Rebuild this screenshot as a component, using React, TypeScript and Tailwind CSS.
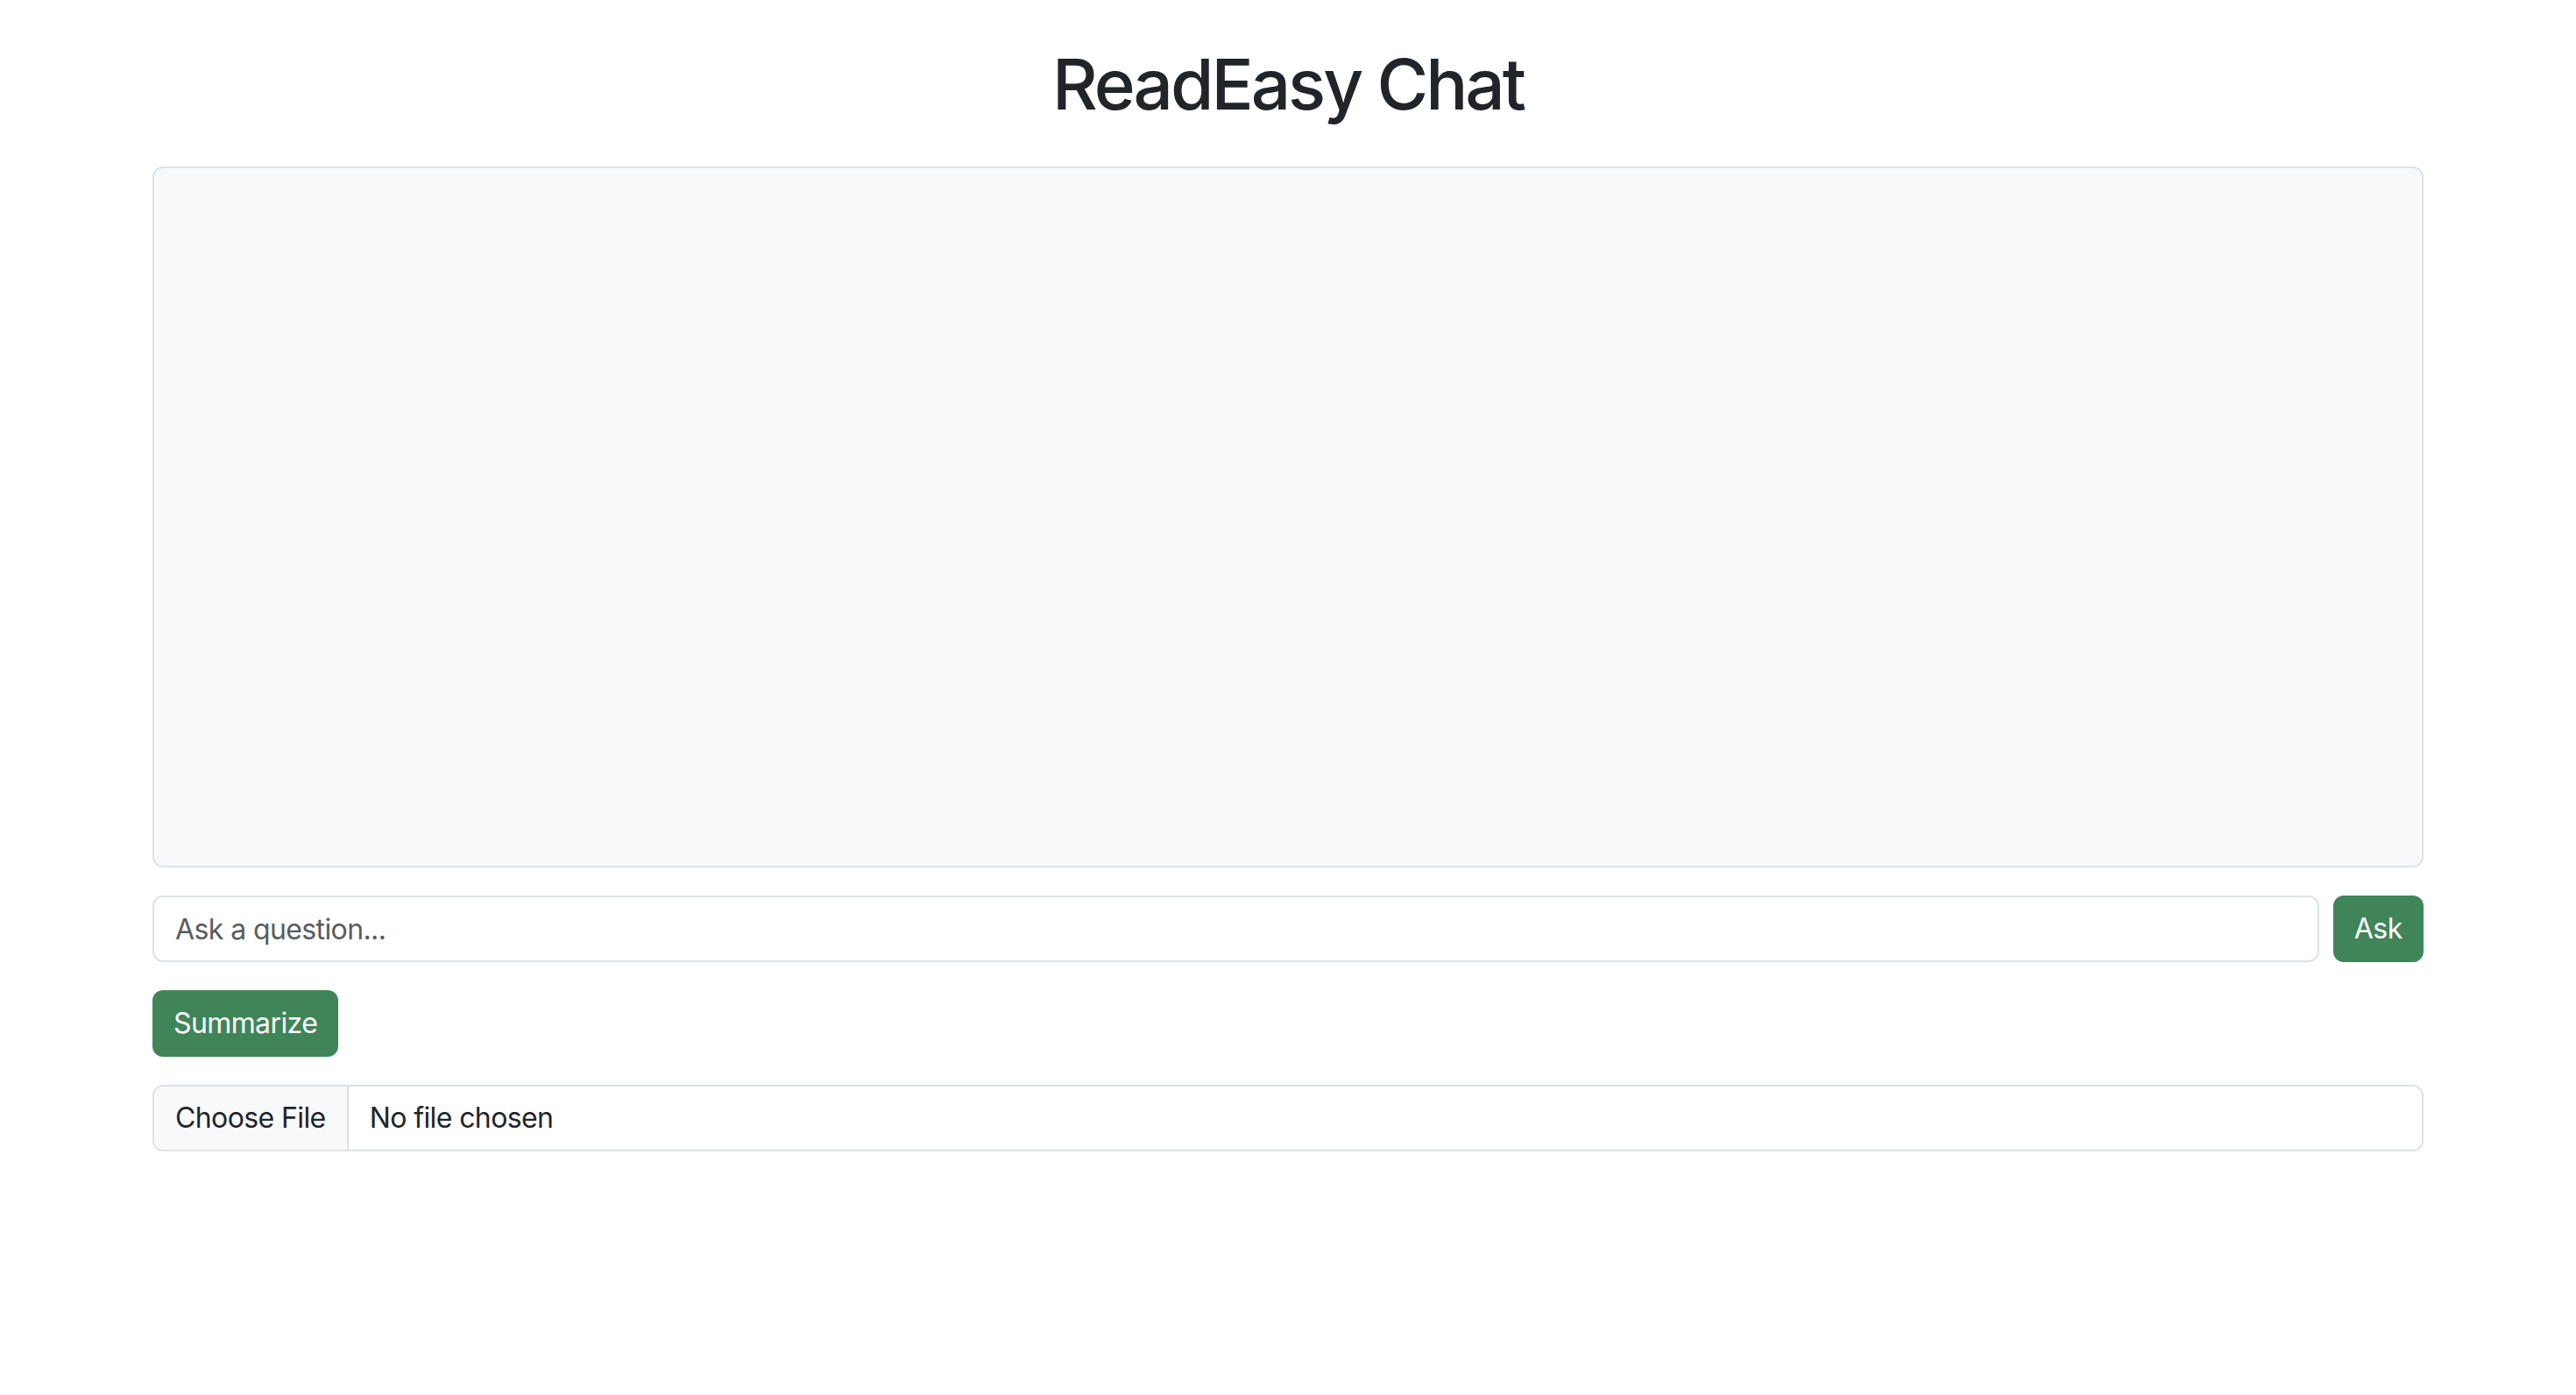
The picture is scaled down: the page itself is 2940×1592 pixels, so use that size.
export default function App() {
  return (
    <div
      className="min-h-screen bg-white text-[#212529]"
      style={{ fontFamily: 'Inter, "Noto Sans", "Liberation Sans", sans-serif' }}
    >
      <div className="mx-auto w-[2592px] pt-[48px]">
        <h1 className="text-center text-[80px] leading-[96px] font-medium mb-[46px] tracking-[-3px]">
          ReadEasy Chat
        </h1>
        <div className="h-[800px] rounded-[12px] border-2 border-[#dee2e6] bg-[#f8f9fa] mb-[32px]" />
        <div className="flex gap-[16px] mb-[32px]">
          <input
            type="text"
            placeholder="Ask a question..."
            className="flex-1 h-[76px] rounded-[12px] border-2 border-[#dee2e6] bg-white px-[24px] text-[32px] leading-[48px] tracking-[-0.6px] text-[#212529] placeholder:text-[#595c5f] outline-none"
          />
          <button className="h-[76px] rounded-[12px] bg-[#408558] px-[24px] text-[32px] leading-[48px] tracking-[-0.4px] text-white">
            Ask
          </button>
        </div>
        <div className="mb-[32px]">
          <button className="h-[76px] rounded-[12px] bg-[#408558] px-[24px] text-[32px] leading-[48px] tracking-[-0.6px] text-white">
            Summarize
          </button>
        </div>
        <div className="flex h-[76px] rounded-[12px] border-2 border-[#dee2e6] bg-white overflow-hidden text-[32px] leading-[48px] tracking-[-0.6px]">
          <div className="flex items-center bg-[#f8f9fa] border-r-2 border-[#dee2e6] px-[24px]">
            Choose File
          </div>
          <div className="flex items-center px-[24px]">No file chosen</div>
        </div>
      </div>
    </div>
  );
}
